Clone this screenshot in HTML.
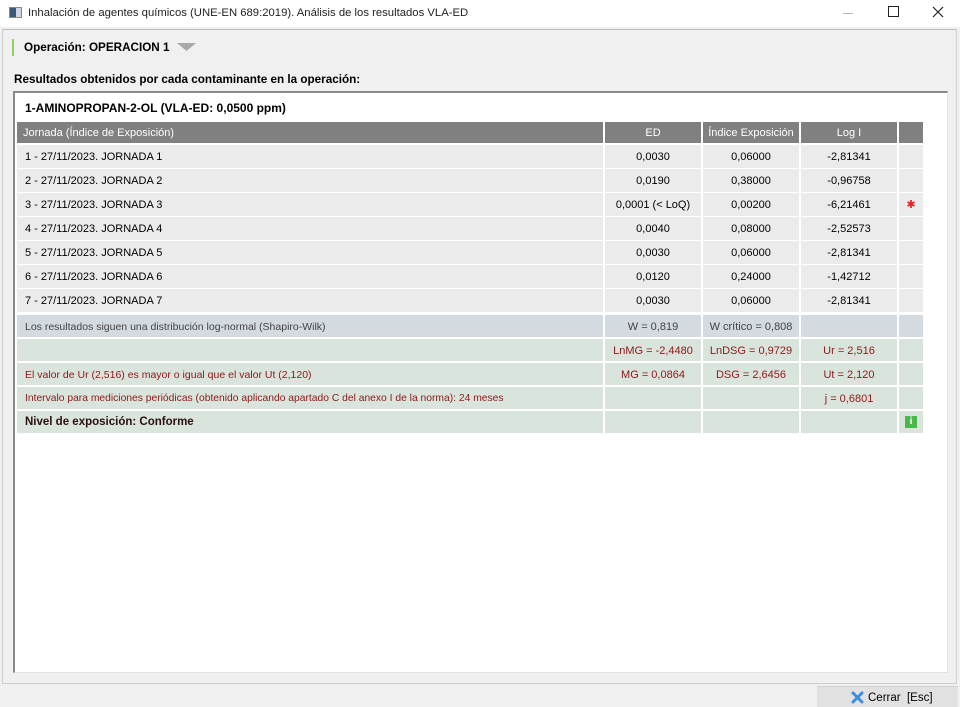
<!DOCTYPE html>
<html><head><meta charset="utf-8"><style>
*{margin:0;padding:0;box-sizing:border-box}
body{width:960px;height:707px;background:#f0f0f0;font-family:"Liberation Sans",sans-serif;position:relative;overflow:hidden;color:#000}
.abs{position:absolute}
.title{left:0;top:0;width:960px;height:27px;background:#fff;color:#222}
.outer{left:2px;top:29px;width:955px;height:655px;border:1px solid #cfcfcf;border-top-color:#bbb}
.inner{left:13px;top:91px;width:935px;height:582px;background:#fff;border-top:2px solid #8a8a8a;border-left:2px solid #8a8a8a;border-right:1px solid #e3e3e3;border-bottom:1px solid #e3e3e3}
.c{position:absolute;font-size:11px;line-height:1;display:flex;align-items:center;padding-top:2px}
.h{background:#808080;color:#fff;justify-content:center}
.r{background:#ebebeb}
.b{background:#d3dae0;color:#444}
.g{background:#d9e4dc;color:#8b1a1a}
.ctr{justify-content:center}
.l{padding-left:8px}
</style></head><body>
<div class="abs title">
 <div class="abs" style="left:9px;top:7px;width:13px;height:11px;background:#3a5a7a;border:1px solid #888"><div style="position:absolute;right:0;top:0;width:5px;height:9px;background:#cfd8e0"></div></div>
 <div class="abs" style="left:28px;top:7px;font-size:11.3px">Inhalación de agentes químicos (UNE-EN 689:2019). Análisis de los resultados VLA-ED</div>
 <div class="abs" style="left:843px;top:13px;width:10px;height:1px;background:#bbb"></div>
 <div class="abs" style="left:888px;top:6px;width:11px;height:11px;border:1px solid #222"></div>
 <svg class="abs" style="left:932px;top:6px" width="12" height="12"><path d="M1 1L11 11M11 1L1 11" stroke="#222" stroke-width="1.2"/></svg>
</div>
<div class="abs outer"></div>
<div class="abs" style="left:12px;top:39px;width:2px;height:17px;background:#8fd06a"></div>
<div class="abs" style="left:24px;top:41px;font-size:11.7px;font-weight:bold">Operación: OPERACION 1</div>
<svg class="abs" style="left:177px;top:43px" width="19" height="9"><path d="M0 0H19L9.5 8Z" fill="#a8a8a8"/></svg>
<div class="abs" style="left:14px;top:73px;font-size:11.7px;font-weight:bold">Resultados obtenidos por cada contaminante en la operación:</div>
<div class="abs inner"></div>
<div class="abs" style="left:25px;top:101px;font-size:12px;font-weight:bold">1-AMINOPROPAN-2-OL (VLA-ED: 0,0500 ppm)</div>

<div class="c h" style="left:17px;top:122px;width:586px;height:21px;justify-content:flex-start;padding-left:6px">Jornada (Índice de Exposición)</div>
<div class="c h" style="left:605px;top:122px;width:96px;height:21px">ED</div>
<div class="c h" style="left:703px;top:122px;width:96px;height:21px">Índice Exposición</div>
<div class="c h" style="left:801px;top:122px;width:96px;height:21px">Log I</div>
<div class="c h" style="left:899px;top:122px;width:24px;height:21px"></div>

<div class="c r l" style="left:17px;top:145px;width:586px;height:23px">1 - 27/11/2023. JORNADA 1</div><div class="c r ctr" style="left:605px;top:145px;width:96px;height:23px">0,0030</div><div class="c r ctr" style="left:703px;top:145px;width:96px;height:23px">0,06000</div><div class="c r ctr" style="left:801px;top:145px;width:96px;height:23px">-2,81341</div><div class="c r" style="left:899px;top:145px;width:24px;height:23px"></div>
<div class="c r l" style="left:17px;top:169px;width:586px;height:23px">2 - 27/11/2023. JORNADA 2</div><div class="c r ctr" style="left:605px;top:169px;width:96px;height:23px">0,0190</div><div class="c r ctr" style="left:703px;top:169px;width:96px;height:23px">0,38000</div><div class="c r ctr" style="left:801px;top:169px;width:96px;height:23px">-0,96758</div><div class="c r" style="left:899px;top:169px;width:24px;height:23px"></div>
<div class="c r l" style="left:17px;top:193px;width:586px;height:23px">3 - 27/11/2023. JORNADA 3</div><div class="c r ctr" style="left:605px;top:193px;width:96px;height:23px">0,0001 (&lt; LoQ)</div><div class="c r ctr" style="left:703px;top:193px;width:96px;height:23px">0,00200</div><div class="c r ctr" style="left:801px;top:193px;width:96px;height:23px">-6,21461</div><div class="c r ctr" style="left:899px;top:193px;width:24px;height:23px;color:#e82020;font-size:11px">✱</div>
<div class="c r l" style="left:17px;top:217px;width:586px;height:23px">4 - 27/11/2023. JORNADA 4</div><div class="c r ctr" style="left:605px;top:217px;width:96px;height:23px">0,0040</div><div class="c r ctr" style="left:703px;top:217px;width:96px;height:23px">0,08000</div><div class="c r ctr" style="left:801px;top:217px;width:96px;height:23px">-2,52573</div><div class="c r" style="left:899px;top:217px;width:24px;height:23px"></div>
<div class="c r l" style="left:17px;top:241px;width:586px;height:23px">5 - 27/11/2023. JORNADA 5</div><div class="c r ctr" style="left:605px;top:241px;width:96px;height:23px">0,0030</div><div class="c r ctr" style="left:703px;top:241px;width:96px;height:23px">0,06000</div><div class="c r ctr" style="left:801px;top:241px;width:96px;height:23px">-2,81341</div><div class="c r" style="left:899px;top:241px;width:24px;height:23px"></div>
<div class="c r l" style="left:17px;top:265px;width:586px;height:23px">6 - 27/11/2023. JORNADA 6</div><div class="c r ctr" style="left:605px;top:265px;width:96px;height:23px">0,0120</div><div class="c r ctr" style="left:703px;top:265px;width:96px;height:23px">0,24000</div><div class="c r ctr" style="left:801px;top:265px;width:96px;height:23px">-1,42712</div><div class="c r" style="left:899px;top:265px;width:24px;height:23px"></div>
<div class="c r l" style="left:17px;top:289px;width:586px;height:23px">7 - 27/11/2023. JORNADA 7</div><div class="c r ctr" style="left:605px;top:289px;width:96px;height:23px">0,0030</div><div class="c r ctr" style="left:703px;top:289px;width:96px;height:23px">0,06000</div><div class="c r ctr" style="left:801px;top:289px;width:96px;height:23px">-2,81341</div><div class="c r" style="left:899px;top:289px;width:24px;height:23px"></div>

<div class="c b l" style="left:17px;top:315px;width:586px;height:22px;font-size:10.5px">Los resultados siguen una distribución log-normal (Shapiro-Wilk)</div><div class="c b ctr" style="left:605px;top:315px;width:96px;height:22px">W = 0,819</div><div class="c b ctr" style="left:703px;top:315px;width:96px;height:22px">W crítico = 0,808</div><div class="c b" style="left:801px;top:315px;width:96px;height:22px"></div><div class="c b" style="left:899px;top:315px;width:24px;height:22px"></div>

<div class="c g l" style="left:17px;top:339px;width:586px;height:22px"></div><div class="c g ctr" style="left:605px;top:339px;width:96px;height:22px">LnMG = -2,4480</div><div class="c g ctr" style="left:703px;top:339px;width:96px;height:22px">LnDSG = 0,9729</div><div class="c g ctr" style="left:801px;top:339px;width:96px;height:22px">Ur = 2,516</div><div class="c g" style="left:899px;top:339px;width:24px;height:22px"></div>

<div class="c g l" style="left:17px;top:363px;width:586px;height:22px;font-size:10.5px">El valor de Ur (2,516) es mayor o igual que el valor Ut (2,120)</div><div class="c g ctr" style="left:605px;top:363px;width:96px;height:22px">MG = 0,0864</div><div class="c g ctr" style="left:703px;top:363px;width:96px;height:22px">DSG = 2,6456</div><div class="c g ctr" style="left:801px;top:363px;width:96px;height:22px">Ut = 2,120</div><div class="c g" style="left:899px;top:363px;width:24px;height:22px"></div>

<div class="c g l" style="left:17px;top:387px;width:586px;height:22px;font-size:10.3px">Intervalo para mediciones periódicas (obtenido aplicando apartado C del anexo I de la norma): 24 meses</div><div class="c g" style="left:605px;top:387px;width:96px;height:22px"></div><div class="c g" style="left:703px;top:387px;width:96px;height:22px"></div><div class="c g ctr" style="left:801px;top:387px;width:96px;height:22px">j = 0,6801</div><div class="c g" style="left:899px;top:387px;width:24px;height:22px"></div>

<div class="c g l" style="left:17px;top:411px;width:586px;height:22px;color:#2a1010;font-weight:bold;font-size:11.5px">Nivel de exposición: Conforme</div><div class="c g" style="left:605px;top:411px;width:96px;height:22px"></div><div class="c g" style="left:703px;top:411px;width:96px;height:22px"></div><div class="c g" style="left:801px;top:411px;width:96px;height:22px"></div><div class="c g ctr" style="left:899px;top:411px;width:24px;height:22px;padding-top:0"><div style="width:12px;height:12px;background:#4cb84c;color:#fff;font-size:10px;font-weight:bold;text-align:center;line-height:12px">i</div></div>

<div class="abs" style="left:817px;top:686px;width:141px;height:21px;background:#e1e1e1;border-top:1px solid #d0d0d0"></div>
<svg class="abs" style="left:851px;top:691px" width="13" height="13"><path d="M2 2L11 11M11 2L2 11" stroke="#3b8de0" stroke-width="3" stroke-linecap="round"/></svg>
<div class="abs" style="left:868px;top:692px;font-size:11.5px">Cerrar&nbsp; [Esc]</div>
</body></html>
